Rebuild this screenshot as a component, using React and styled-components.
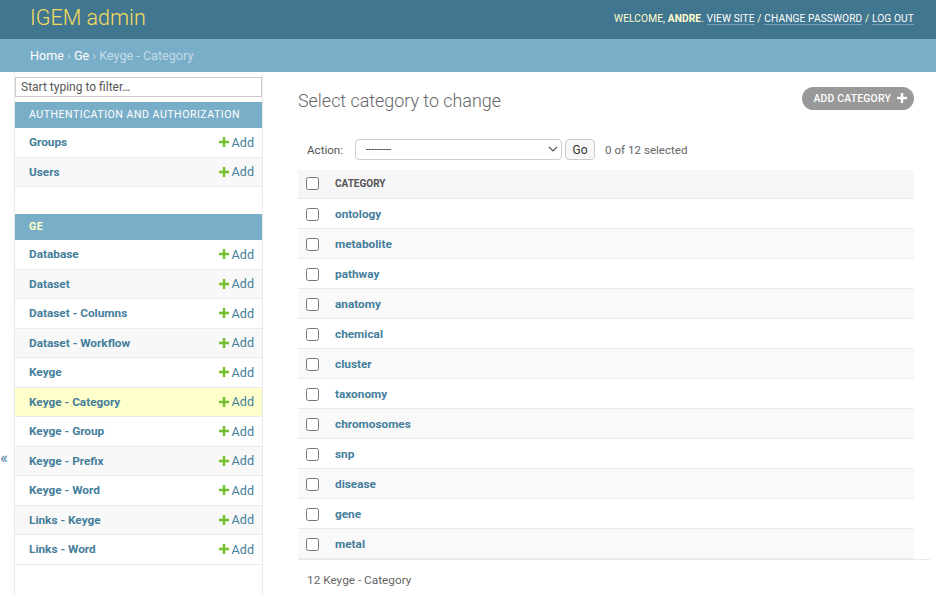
import React from "react";
import styled, { createGlobalStyle } from "styled-components";

const Global = createGlobalStyle`
  html, body { margin: 0; padding: 0; background: #fff; }
  body { font-family: Roboto, "Liberation Sans", Arial, sans-serif; color: #333; font-size: 13px; }
  * { box-sizing: border-box; }
  a { text-decoration: none; }
`;

const Header = styled.header`
  height: 39px;
  background: #417690;
  display: flex;
  align-items: center;
  justify-content: space-between;
  padding: 0 22px 3px 30px;
`;

const Brand = styled.h1`
  margin: 0;
  font-size: 21.5px;
  font-weight: 300;
  color: #f5dd5d;
  line-height: 1;
`;

const UserTools = styled.div`
  font-size: 10.2px;
  letter-spacing: 0.1px;
  text-transform: uppercase;
  color: #ffc;
  white-space: nowrap;
`;

const Strong = styled.strong`
  font-weight: 700;
`;

const ToolLink = styled.a`
  color: #fff;
  border-bottom: 1px solid rgba(255, 255, 255, 0.3);
`;

const Breadcrumbs = styled.nav`
  height: 33px;
  background: #79aec8;
  color: #c4dce8;
  font-size: 12.6px;
  display: flex;
  align-items: center;
  padding: 0 30px;
`;

const Crumb = styled.a`
  color: #fff;
`;

const Main = styled.div`
  display: flex;
  align-items: stretch;
  min-height: 522px;
`;

const Toggle = styled.button`
  flex: 0 0 14px;
  width: 14px;
  border: 0;
  background: transparent;
  color: #447e9b;
  font-size: 17px;
  padding: 377px 0 0 0;
  display: flex;
  justify-content: flex-start;
  align-items: flex-start;
  line-height: 1;
  font-family: Roboto, sans-serif;
`;

const Sidebar = styled.nav`
  flex: 0 0 249px;
  border-left: 1px solid #eaeaea;
  border-right: 1px solid #eaeaea;
  padding-top: 5px;
`;

const Filter = styled.input`
  display: block;
  width: 100%;
  height: 20px;
  margin: 0 0 5px 0;
  border: 1px solid #ccc;
  background: #fff;
  padding: 0 5px;
  font-family: Roboto, sans-serif;
  font-size: 12px;
  color: #333;
  &::placeholder { color: #555; }
`;

const Module = styled.div`
  margin-bottom: ${(p) => p.$mb || 0}px;
`;

const Caption = styled.div`
  height: 26px;
  background: #79aec8;
  color: ${(p) => (p.$current ? "#ffc" : "#fff")};
  font-size: 10.6px;
  font-weight: ${(p) => (p.$current ? 700 : 400)};
  letter-spacing: 0.5px;
  text-transform: uppercase;
  display: flex;
  align-items: center;
  padding: 0 14px 1px;
`;

const NavRow = styled.div`
  height: 29.5px;
  display: flex;
  align-items: center;
  justify-content: space-between;
  padding: 0 8px 0 14px;
  border-bottom: 1px solid #eaeaea;
  background: ${(p) => (p.$current ? "#ffffcc" : p.$alt ? "#f8f8f8" : "#fff")};
`;

const NavLink = styled.a`
  color: #447e9b;
  font-weight: 700;
  font-size: 11.8px;
`;

const AddLink = styled.a`
  color: #447e9b;
  font-size: 12.6px;
  display: flex;
  align-items: center;
  gap: 3px;
`;

const Content = styled.main`
  flex: 1;
  padding: 14px 22px 0 35px;
  min-width: 0;
`;

const TitleRow = styled.div`
  display: flex;
  align-items: center;
  justify-content: space-between;
  height: 24px;
`;

const Title = styled.h1`
  margin: 0;
  font-size: 17.9px;
  font-weight: 300;
  color: #666;
  padding-top: 4px;
`;

const AddButton = styled.a`
  height: 23px;
  border-radius: 12px;
  background: #999;
  color: #fff;
  font-size: 10.4px;
  font-weight: 500;
  letter-spacing: 0.2px;
  text-transform: uppercase;
  display: flex;
  align-items: center;
  gap: 6px;
  padding: 0 7px 0 11px;
`;

const Actions = styled.div`
  display: flex;
  align-items: center;
  height: 21px;
  margin-top: 29px;
  padding-left: 9px;
  color: #666;
  font-size: 11.6px;
`;

const ActionLabel = styled.label`
  margin-right: 12px;
  color: #555;
`;

const SelectWrap = styled.div`
  position: relative;
  width: 207px;
  height: 21px;
  margin-right: 3px;
`;

const Select = styled.select`
  appearance: none;
  width: 100%;
  height: 100%;
  border: 1px solid #ccc;
  border-radius: 4px;
  background: #fff;
  font-family: Roboto, sans-serif;
  font-size: 10px;
  color: #333;
  padding: 0 10px;
`;

const Chevron = styled.svg`
  position: absolute;
  right: 4px;
  top: 6px;
  pointer-events: none;
`;

const GoButton = styled.button`
  height: 21px;
  width: 30px;
  border: 1px solid #ccc;
  border-radius: 4px;
  background: #f8f8f8;
  font-family: Roboto, sans-serif;
  font-size: 12px;
  color: #333;
  padding: 0;
  margin-right: 10px;
`;

const Table = styled.table`
  width: 100%;
  border-collapse: collapse;
  margin-top: 10px;
`;

const HeadCell = styled.th`
  height: 28px;
  background: #f6f6f6;
  text-align: left;
  font-size: 10px;
  font-weight: 700;
  color: #555;
  text-transform: uppercase;
  padding: 0;
  border-bottom: 1px solid #eaeaea;
  width: ${(p) => (p.$check ? "37px" : "auto")};
  padding-left: ${(p) => (p.$check ? "8px" : "0")};
`;

const Row = styled.tr`
  background: ${(p) => (p.$alt ? "#f9f9f9" : "#fff")};
`;

const Cell = styled.td`
  height: 30px;
  padding: 0 0 0 8px;
  border-bottom: 1px solid #eaeaea;
  width: 37px;
`;

const NameCell = styled.th`
  height: 30px;
  text-align: left;
  padding: 0;
  border-bottom: 1px solid #eaeaea;
`;

const ItemLink = styled.a`
  color: #447e9b;
  font-weight: 700;
  font-size: 11.8px;
`;

const Check = styled.input`
  margin: 0;
  width: 13px;
  height: 13px;
  vertical-align: middle;
`;

const Paginator = styled.p`
  margin: 0 -16px 0 0;
  border-top: 1px solid #eaeaea;
  padding: 13px 9px;
  font-size: 11.8px;
  color: #666;
`;

const Plus = ({ size = 10, color = "#70bf2b" }) => (
  <svg width={size} height={size} viewBox="0 0 10 10">
    <path d="M3.8 0h2.4v3.8H10v2.4H6.2V10H3.8V6.2H0V3.8h3.8z" fill={color} />
  </svg>
);

const authModels = ["Groups", "Users"];
const geModels = [
  "Database",
  "Dataset",
  "Dataset - Columns",
  "Dataset - Workflow",
  "Keyge",
  "Keyge - Category",
  "Keyge - Group",
  "Keyge - Prefix",
  "Keyge - Word",
  "Links - Keyge",
  "Links - Word",
];
const categories = [
  "ontology",
  "metabolite",
  "pathway",
  "anatomy",
  "chemical",
  "cluster",
  "taxonomy",
  "chromosomes",
  "snp",
  "disease",
  "gene",
  "metal",
];

export default function App() {
  return (
    <>
      <Global />
      <Header>
        <Brand>IGEM admin</Brand>
        <UserTools>
          Welcome, <Strong>Andre</Strong>. <ToolLink href="#">View site</ToolLink> /{" "}
          <ToolLink href="#">Change password</ToolLink> / <ToolLink href="#">Log out</ToolLink>
        </UserTools>
      </Header>
      <Breadcrumbs>
        <Crumb href="#">Home</Crumb>&nbsp;›&nbsp;<Crumb href="#">Ge</Crumb>&nbsp;›&nbsp;Keyge - Category
      </Breadcrumbs>
      <Main>
        <Toggle aria-label="Toggle navigation">«</Toggle>
        <Sidebar>
          <Filter placeholder="Start typing to filter…" />
          <Module $mb={27}>
            <Caption>Authentication and Authorization</Caption>
            {authModels.map((m, i) => (
              <NavRow key={m} $alt={i % 2 === 1}>
                <NavLink href="#">{m}</NavLink>
                <AddLink href="#">
                  <Plus />
                  Add
                </AddLink>
              </NavRow>
            ))}
          </Module>
          <Module>
            <Caption $current>Ge</Caption>
            {geModels.map((m, i) => (
              <NavRow key={m} $alt={i % 2 === 1} $current={m === "Keyge - Category"}>
                <NavLink href="#">{m}</NavLink>
                <AddLink href="#">
                  <Plus />
                  Add
                </AddLink>
              </NavRow>
            ))}
          </Module>
        </Sidebar>
        <Content>
          <TitleRow>
            <Title>Select category to change</Title>
            <AddButton href="#">
              Add category
              <Plus size={10} color="#fff" />
            </AddButton>
          </TitleRow>
          <Actions>
            <ActionLabel>Action:</ActionLabel>
            <SelectWrap>
              <Select defaultValue="">
                <option value="">---------</option>
                <option value="delete">Delete selected</option>
              </Select>
              <Chevron width="10" height="8" viewBox="0 0 10 8">
                <path d="M1 2l4 4 4-4" stroke="#555" strokeWidth="1.2" fill="none" />
              </Chevron>
            </SelectWrap>
            <GoButton>Go</GoButton>
            <span>0 of 12 selected</span>
          </Actions>
          <Table>
            <thead>
              <tr>
                <HeadCell $check>
                  <Check type="checkbox" />
                </HeadCell>
                <HeadCell>Category</HeadCell>
              </tr>
            </thead>
            <tbody>
              {categories.map((c, i) => (
                <Row key={c} $alt={i % 2 === 1}>
                  <Cell>
                    <Check type="checkbox" />
                  </Cell>
                  <NameCell>
                    <ItemLink href="#">{c}</ItemLink>
                  </NameCell>
                </Row>
              ))}
            </tbody>
          </Table>
          <Paginator>12 Keyge - Category</Paginator>
        </Content>
      </Main>
    </>
  );
}
